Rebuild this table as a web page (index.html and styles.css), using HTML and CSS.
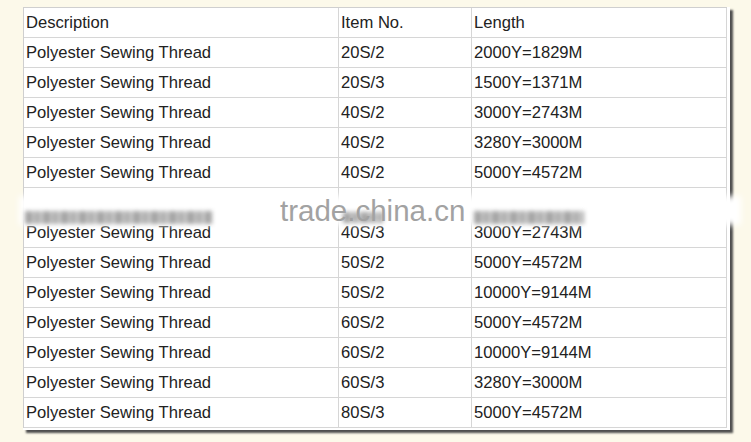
FILE: index.html
```html
<!DOCTYPE html>
<html lang="en">
<head>
<meta charset="utf-8">
<title>Polyester Sewing Thread</title>
<link rel="stylesheet" href="styles.css">
</head>
<body>
<div class="frame">
  <div class="grid">
    <div class="cell">Description</div><div class="cell">Item No.</div><div class="cell">Length</div>
    <div class="cell">Polyester Sewing Thread</div><div class="cell">20S/2</div><div class="cell">2000Y=1829M</div>
    <div class="cell">Polyester Sewing Thread</div><div class="cell">20S/3</div><div class="cell">1500Y=1371M</div>
    <div class="cell">Polyester Sewing Thread</div><div class="cell">40S/2</div><div class="cell">3000Y=2743M</div>
    <div class="cell">Polyester Sewing Thread</div><div class="cell">40S/2</div><div class="cell">3280Y=3000M</div>
    <div class="cell">Polyester Sewing Thread</div><div class="cell">40S/2</div><div class="cell">5000Y=4572M</div>
    <div class="cell tall">Polyester Sewing Thread</div><div class="cell tall">40S/3</div><div class="cell tall">3000Y=2743M</div>
    <div class="cell">Polyester Sewing Thread</div><div class="cell">50S/2</div><div class="cell">5000Y=4572M</div>
    <div class="cell">Polyester Sewing Thread</div><div class="cell">50S/2</div><div class="cell">10000Y=9144M</div>
    <div class="cell">Polyester Sewing Thread</div><div class="cell">60S/2</div><div class="cell">5000Y=4572M</div>
    <div class="cell">Polyester Sewing Thread</div><div class="cell">60S/2</div><div class="cell">10000Y=9144M</div>
    <div class="cell">Polyester Sewing Thread</div><div class="cell">60S/3</div><div class="cell">3280Y=3000M</div>
    <div class="cell">Polyester Sewing Thread</div><div class="cell">80S/3</div><div class="cell">5000Y=4572M</div>
  </div>
  <div class="band"></div>
  <div class="ghost ghost-1"></div>
  <div class="ghost ghost-2"></div>
  <div class="ghost ghost-3"></div>
  <div class="watermark">trade.china.cn</div>
</div>
</body>
</html>
```
FILE: styles.css
```css
html, body {
  margin: 0;
  padding: 0;
}
body {
  background: #fcf9ea;
  font-family: "Liberation Sans", Arial, sans-serif;
  width: 751px;
  height: 442px;
  overflow: hidden;
}
.frame {
  position: relative;
  display: inline-block;
  margin: 7px 0 0 23px;
  background: #ffffff;
  padding: 0 3px 2px 0;
  box-shadow: 3px 3px 2px #4e4e4e;
}
.grid {
  display: grid;
  grid-template-columns: 315px 133px 255px;
  border-top: 1px solid #cfcfcf;
  border-left: 1px solid #cfcfcf;
}
.cell {
  height: 29px;
  line-height: 29px;
  padding-left: 2px;
  font-size: 16.6px;
  color: #222222;
  border-right: 1px solid #d6d6d6;
  border-bottom: 1px solid #d6d6d6;
  white-space: nowrap;
}
.cell.tall {
  height: 59px;
  display: flex;
  align-items: flex-end;
}
.band {
  position: absolute;
  left: -4px;
  top: 189px;
  width: 722px;
  height: 29px;
  background: #ffffff;
  filter: blur(3px);
}
.ghost {
  position: absolute;
  height: 13px;
  filter: blur(2px);
  opacity: 0.8;
  background: repeating-linear-gradient(90deg, #8e8e8e 0 7px, #b8b8b8 7px 10px, #9a9a9a 10px 15px, #c4c4c4 15px 18px);
}
.ghost-1 { left: 2px; top: 204px; width: 187px; }
.ghost-2 { left: 320px; top: 205px; width: 40px; height: 11px; }
.ghost-3 { left: 451px; top: 204px; width: 110px; }
.watermark {
  position: absolute;
  left: 257px;
  top: 192px;
  font-size: 29.5px;
  line-height: 24px;
  color: #a2a2a2;
  white-space: nowrap;
}
```
